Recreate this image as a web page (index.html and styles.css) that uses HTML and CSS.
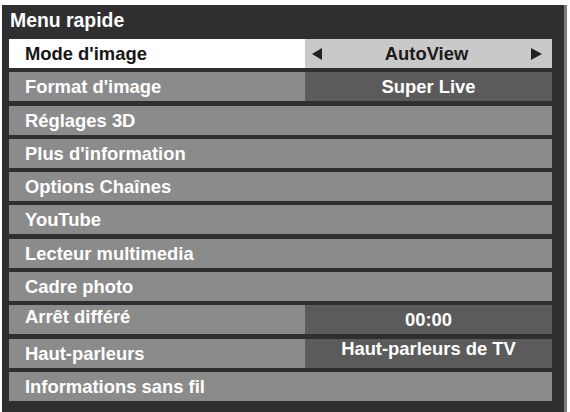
FILE: index.html
```html
<!DOCTYPE html>
<html lang="fr">
<head>
<meta charset="utf-8">
<title>Menu rapide</title>
<link rel="stylesheet" href="styles.css">
</head>
<body>
<div class="frame">
  <div class="title">Menu rapide</div>
  <div class="rows">
    <div class="row row--active">
      <div class="label">Mode d'image</div>
      <div class="value value--select">
        <span class="arrow arrow--left"></span>
        <span class="value-text">AutoView</span>
        <span class="arrow arrow--right"></span>
      </div>
    </div>
    <div class="row">
      <div class="label">Format d'image</div>
      <div class="value"><span class="value-text">Super Live</span></div>
    </div>
    <div class="row"><div class="label">Réglages 3D</div></div>
    <div class="row"><div class="label">Plus d'information</div></div>
    <div class="row"><div class="label">Options Chaînes</div></div>
    <div class="row"><div class="label">YouTube</div></div>
    <div class="row"><div class="label">Lecteur multimedia</div></div>
    <div class="row"><div class="label">Cadre photo</div></div>
    <div class="row">
      <div class="label label--raised">Arrêt différé</div>
      <div class="value"><span class="value-text">00:00</span></div>
    </div>
    <div class="row">
      <div class="label">Haut-parleurs</div>
      <div class="value"><span class="value-text value-text--raised">Haut-parleurs de TV</span></div>
    </div>
    <div class="row"><div class="label">Informations sans fil</div></div>
  </div>
</div>
</body>
</html>
```
FILE: styles.css
```css
html, body {
  margin: 0;
  padding: 0;
  background: #ffffff;
}

body {
  font-family: "Liberation Sans", Arial, sans-serif;
  font-weight: bold;
  overflow: hidden;
}

.frame {
  box-sizing: border-box;
  margin: 5px 0 0 2px;
  width: 565px;
  height: 420px;
  background: #2f2f2f;
  border-right: 3px solid #7c7c7c;
  padding: 0 12px 0 7px;
}

.title {
  height: 30px;
  line-height: 30px;
  font-size: 19.4px;
  color: #ffffff;
  padding-left: 1px;
  margin-bottom: 4px;
}

.rows {
  display: flex;
  flex-direction: column;
  gap: 4.3px;
}

.row {
  display: grid;
  grid-template-columns: 296px 1fr;
  height: 29px;
  background: #8b8b8b;
  font-size: 18.4px;
  line-height: 29px;
}

.label {
  padding-left: 16px;
  color: #ffffff;
  white-space: nowrap;
}

.label--raised {
  position: relative;
  top: -3px;
}

.value {
  background: #5b5b5b;
  color: #ffffff;
  display: flex;
  align-items: center;
  justify-content: center;
  white-space: nowrap;
}

.value-text {
  line-height: 29px;
}

.value-text--raised {
  position: relative;
  top: -5px;
}

.row--active {
  background: #ffffff;
}

.row--active .label {
  color: #161616;
}

.value--select {
  background: #c9c9c9;
  color: #1a1a1a;
  justify-content: space-between;
  padding: 0 10px 0 7px;
}

.value--select .value-text {
  flex: 1;
  text-align: center;
}

.arrow {
  width: 0;
  height: 0;
  border-top: 6px solid transparent;
  border-bottom: 6px solid transparent;
}

.arrow--left {
  border-right: 10px solid #222222;
}

.arrow--right {
  border-left: 11px solid #222222;
}
```
